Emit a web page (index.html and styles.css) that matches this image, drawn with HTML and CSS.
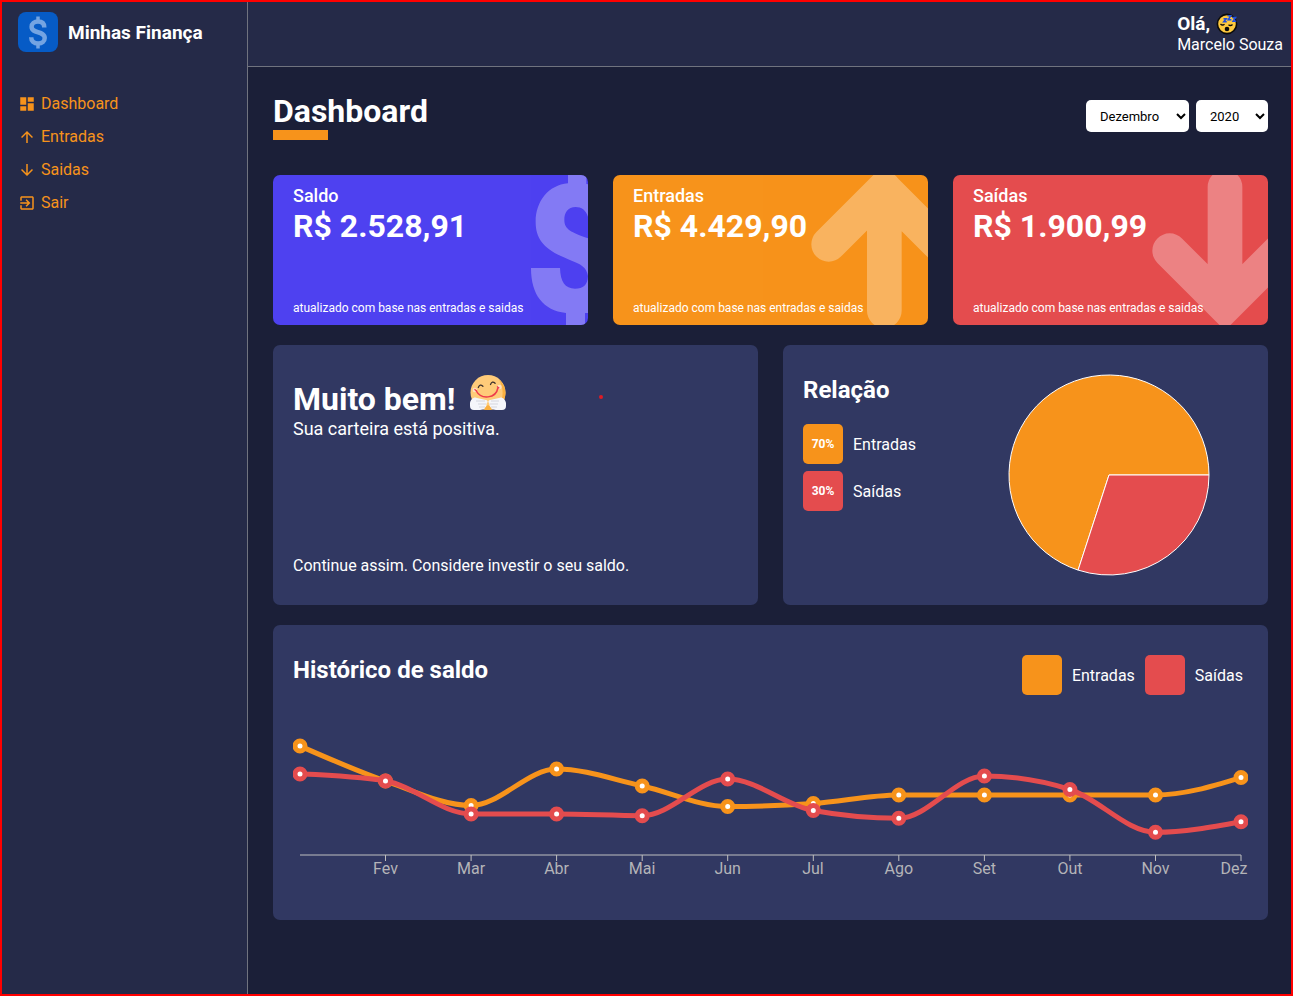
FILE: index.html
```html
<!DOCTYPE html>
<html lang="pt-BR">
<head>
<meta charset="utf-8">
<meta name="viewport" content="width=device-width, initial-scale=1">
<title>Minhas Finança</title>
<link rel="stylesheet" href="styles.css">
</head>
<body>
<div class="layout">
  <aside class="sidebar">
    <div class="brand">
      <svg class="brand-logo" viewBox="0 0 40 40" aria-hidden="true">
        <rect width="40" height="40" rx="8" fill="#065bc6"/>
        <g fill="none" stroke="#74a4e2">
          <path d="M20 4.500V10M20 31v5.500" stroke-width="3.500"/>
          <path d="M26.300 15.500C26.300 11.700 24 9.600 20 9.600C16.300 9.600 13.600 11.800 13.600 14.800C13.600 22 26.700 18.500 26.700 26C26.700 29.500 24 31.500 20.200 31.500C15.800 31.500 13.200 29.200 13.200 25.200" stroke-width="4.500"/>
        </g>
      </svg>
      <h3 class="brand-name">Minhas Finança</h3>
    </div>
    <nav class="menu">
      <a class="menu-link" href="#dashboard"><svg class="menu-icon" viewBox="0 0 24 24" aria-hidden="true"><path d="M3 13h8V3H3v10zm0 8h8v-6H3v6zm10 0h8V11h-8v10zm0-18v6h8V3h-8z"/></svg>Dashboard</a>
      <a class="menu-link" href="#entradas"><svg class="menu-icon" viewBox="0 0 24 24" aria-hidden="true"><path d="M4 12l1.410 1.410L11 7.830V20h2V7.830l5.580 5.590L20 12l-8-8-8 8z"/></svg>Entradas</a>
      <a class="menu-link" href="#saidas"><svg class="menu-icon" viewBox="0 0 24 24" aria-hidden="true"><path d="M20 12l-1.410-1.410L13 16.170V4h-2v12.170l-5.580-5.590L4 12l8 8 8-8z"/></svg>Saidas</a>
      <a class="menu-link" href="#sair"><svg class="menu-icon" viewBox="0 0 24 24" aria-hidden="true"><path d="M10.090 15.590L11.500 17l5-5-5-5-1.410 1.410L12.670 11H3v2h9.670l-2.580 2.590zM19 3H5c-1.110 0-2 .9-2 2v4h2V5h14v14H5v-4H3v4c0 1.100.89 2 2 2h14c1.100 0 2-.9 2-2V5c0-1.100-.9-2-2-2z"/></svg>Sair</a>
    </nav>
  </aside>

  <header class="topbar">
    <div class="profile">
      <h3 class="greeting">Olá,
        <svg class="greeting-emoji" viewBox="0 0 22 22" aria-hidden="true">
          <circle cx="11" cy="11" r="9.600" fill="#fec93e" stroke="#0b0b0b" stroke-width="1.600"/>
          <path d="M4.500 11q2 2 4 .3M12.500 11.800q2 1.600 4-.4" fill="none" stroke="#0b0b0b" stroke-width="1.400"/>
          <ellipse cx="11" cy="16" rx="2.300" ry="2.300" fill="#0b0b0b"/>
          <path d="M7.500 5.800h2.700L7.800 8.700h2.900M11.500 2.800h3.200l-2.500 4h3.200M16.200 4.500h3.300l-2.400 3.800h3.200" fill="none" stroke="#1f4ee0" stroke-width="1.600"/>
        </svg>
      </h3>
      <span class="user-name">Marcelo Souza</span>
    </div>
  </header>

  <main class="content">
    <div class="page-head">
      <h1 class="page-title">Dashboard</h1>
      <div class="filters">
        <select class="filter" aria-label="Mês"><option>Novembro</option><option selected>Dezembro</option></select>
        <select class="filter" aria-label="Ano"><option>2020</option><option>2019</option></select>
      </div>
    </div>

    <div class="cards">
      <section class="card card-balance">
        <svg class="card-art art-dollar" viewBox="774 270 195 450" aria-hidden="true">
          <path d="M909 270H964V297L969 298V395C962 375 950 366 932 366C908 366 898 383 898 405C898 433 918 442 969 460V573C965 545 945 537 920 527C845 497 812 470 812 410C812 350 850 300 909 295Z"/>
          <path d="M798 549H885C886 590 900 611 930 611C955 611 968 600 969 573V684H960V720H903V684C835 676 798 630 798 549Z"/>
        </svg>
        <span class="card-label">Saldo</span>
        <strong class="card-value">R$ 2.528,91</strong>
        <small class="card-note">atualizado com base nas entradas e saidas</small>
      </section>
      <section class="card card-income">
        <svg class="card-art art-arrow" viewBox="609 30 360 450" aria-hidden="true">
          <path d="M671 238L837 72L1003 238M838 72V437"/>
        </svg>
        <span class="card-label">Entradas</span>
        <strong class="card-value">R$ 4.429,90</strong>
        <small class="card-note">atualizado com base nas entradas e saidas</small>
      </section>
      <section class="card card-expense">
        <svg class="card-art art-arrow" viewBox="609 30 360 450" aria-hidden="true">
          <path d="M674 257L840 423L1006 257M840 423V66"/>
        </svg>
        <span class="card-label">Saídas</span>
        <strong class="card-value">R$ 1.900,99</strong>
        <small class="card-note">atualizado com base nas entradas e saidas</small>
      </section>
    </div>

    <div class="panels">
      <section class="panel message">
        <div>
          <h1 class="message-title">Muito bem!
            <svg class="message-emoji" viewBox="0 0 36 36" aria-hidden="true">
              <circle cx="18" cy="17.500" r="17.500" fill="#ffcb79"/>
              <path d="M29 4.500a17.500 17.500 0 0 1-1 28C35 22 33 12 29 4.500z" fill="#fbb040"/>
              <circle cx="4.800" cy="15" r="2.200" fill="#ffe3c2"/><circle cx="29.500" cy="12" r="2.200" fill="#ffe3c2"/>
              <path d="M8.300 12.500q1.600-4 4.600-1.300M20.500 9.500q1.600-4 4.600-1.300" fill="none" stroke="#3b302c" stroke-width="1.300" stroke-linecap="round"/>
              <path d="M6 15.500C11 25 26 24 28 12.500" fill="none" stroke="#ee3b4b" stroke-width="1.500"/>
              <path d="M4.500 14.300l2.500 2M27 11.500l2.300 1.800" stroke="#ee3b4b" stroke-width="1.200"/>
              <path d="M0 31C-1 25 4 21 7 23L16 25C19 26 17 28 16.500 29C17 33 14 35 10 35H4Q0 35 0 31zM36 31C37 25 32 21 29 23L20 25C17 26 19 28 19.500 29C19 33 22 35 26 35H32Q36 35 36 31z" fill="#f5f6fa"/>
              <path d="M6 26h9M8 29h8M9 32h6M29 26h-8M28 29h-8M27 32h-6" stroke="#d4d6df" stroke-width="1"/>
              <path d="M14.500 35q0-3 3.500-5q3.500 2 3.500 5z" fill="#fbb040"/>
            </svg>
          </h1>
          <p class="message-text">Sua carteira está positiva.</p>
        </div>
        <span class="message-foot">Continue assim. Considere investir o seu saldo.</span>
        <i class="marker"></i>
      </section>

      <section class="panel ratio">
        <div class="ratio-side">
          <h2 class="panel-title">Relação</h2>
          <ul class="ratio-legend">
            <li class="legend-item"><span class="swatch swatch-income">70%</span>Entradas</li>
            <li class="legend-item"><span class="swatch swatch-expense">30%</span>Saídas</li>
          </ul>
        </div>
        <div class="ratio-chart">
          <svg class="pie" viewBox="-101 -101 202 202" role="img" aria-label="Entradas 70%, Saídas 30%">
            <path d="M0 0H100A100 100 0 1 0 -30.900 95.100Z" fill="#f7931b"/>
            <path d="M0 0H100A100 100 0 0 1 -30.900 95.100Z" fill="#e44c4e"/>
          </svg>
        </div>
      </section>
    </div>

    <section class="panel history">
      <div class="history-head">
        <h2 class="panel-title">Histórico de saldo</h2>
        <ul class="history-legend">
          <li class="legend-item"><span class="swatch swatch-income"></span>Entradas</li>
          <li class="legend-item"><span class="swatch swatch-expense"></span>Saídas</li>
        </ul>
      </div>
      <svg class="line-chart" viewBox="0 0 955 160" role="img" aria-label="Histórico de saldo por mês">
        <path class="axis" d="M7 125H948M92.500 125v6M178.100 125v6M263.600 125v6M349.200 125v6M434.700 125v6M520.300 125v6M605.800 125v6M691.400 125v6M776.900 125v6M862.500 125v6M948 125v6"/>
        <g class="months">
          <text x="92.500" y="144">Fev</text><text x="178" y="144">Mar</text><text x="263.600" y="144">Abr</text><text x="349" y="144">Mai</text><text x="434.700" y="144">Jun</text><text x="520" y="144">Jul</text><text x="605.800" y="144">Ago</text><text x="691.400" y="144">Set</text><text x="777" y="144">Out</text><text x="862.500" y="144">Nov</text><text x="941" y="144">Dez</text>
        </g>
        <g class="series series-income">
          <path d="M7 16C35.500 28.500 64 41.100 92.500 51C121 60.900 149.600 75.500 178.100 75.500C206.600 75.500 235.100 39 263.600 39C292.100 39 320.700 49.800 349.200 56C377.700 62.200 406.200 76.500 434.700 76.500C463.200 76.500 491.800 75.400 520.300 73.500C548.800 71.600 577.300 65 605.800 65H862.500C891 65 919.500 56.200 948 47.500"/>
          <circle cx="7" cy="16" r="5"/><circle cx="92.500" cy="51" r="5"/><circle cx="178.100" cy="75.500" r="5"/><circle cx="263.600" cy="39" r="5"/><circle cx="349.200" cy="56" r="5"/><circle cx="434.700" cy="76.500" r="5"/><circle cx="520.300" cy="73.500" r="5"/><circle cx="605.800" cy="65" r="5"/><circle cx="691.400" cy="65" r="5"/><circle cx="776.900" cy="65" r="5"/><circle cx="862.500" cy="65" r="5"/><circle cx="948" cy="47.500" r="5"/>
        </g>
        <g class="series series-expense">
          <path d="M7 44C35.500 45.200 64 46.300 92.500 51C121 55.700 149.600 84 178.100 84H263.600C292.100 84 320.700 85.700 349.200 85.700C377.700 85.700 406.200 49 434.700 49C463.200 49 491.800 75.300 520.300 80.500C548.800 85.700 577.300 88.300 605.800 88.300C634.300 88.300 662.900 46 691.400 46C719.900 46 748.400 50.500 776.900 59.500C805.400 68.500 834 102.300 862.500 102.300C891 102.300 919.500 97 948 91.700"/>
          <circle cx="7" cy="44" r="5"/><circle cx="92.500" cy="51" r="5"/><circle cx="178.100" cy="84" r="5"/><circle cx="263.600" cy="84" r="5"/><circle cx="349.200" cy="85.700" r="5"/><circle cx="434.700" cy="49" r="5"/><circle cx="520.300" cy="80.500" r="5"/><circle cx="605.800" cy="88.300" r="5"/><circle cx="691.400" cy="46" r="5"/><circle cx="776.900" cy="59.500" r="5"/><circle cx="862.500" cy="102.300" r="5"/><circle cx="948" cy="91.700" r="5"/>
        </g>
      </svg>
    </section>
  </main>
</div>
</body>
</html>
```
FILE: styles.css
```css
* { box-sizing: border-box; margin: 0; padding: 0; }

body {
  font-family: Roboto, "Liberation Sans", sans-serif;
  font-size: 16px;
  color: #fff;
  background: #1b1f38;
}

body::after {
  content: "";
  position: fixed;
  inset: 0;
  border: 2px solid #f00;
  pointer-events: none;
}

ul { list-style: none; }

.layout {
  display: grid;
  grid-template-columns: 248px 1fr;
  grid-template-rows: 67px 1fr;
  grid-template-areas: "side top" "side main";
  min-height: 100vh;
}

.sidebar {
  grid-area: side;
  background: #252a48;
  border-right: 1px solid #70737f;
}

.brand { display: flex; align-items: center; gap: 10px; padding: 12px 18px; }
.brand-logo { width: 40px; height: 40px; }
.brand-name { padding-top: 2px; font-size: 19px; line-height: 24px; }

.menu { display: flex; flex-direction: column; gap: 14px; padding: 30px 18px; }
.menu-link {
  display: flex;
  align-items: center;
  gap: 5px;
  line-height: 19px;
  color: #f7931b;
  text-decoration: none;
}
.menu-icon { width: 18px; height: 18px; fill: currentColor; }

.topbar {
  grid-area: top;
  display: flex;
  justify-content: flex-end;
  align-items: center;
  padding: 2px 10px 0;
  background: #252a48;
  border-bottom: 1px solid #70737f;
}
.greeting { display: flex; align-items: center; gap: 6px; font-size: 19px; line-height: 22px; }
.greeting-emoji { width: 22px; height: 22px; }
.user-name { display: block; line-height: 20px; }

.content {
  grid-area: main;
  display: flex;
  flex-direction: column;
  gap: 20px;
  padding: 25px;
}

.page-head { display: flex; justify-content: space-between; margin-bottom: 15px; }
.page-title { font-size: 32px; line-height: 38px; }
.page-title::after { content: ""; display: block; width: 55px; height: 10px; background: #f7931b; }
.filters { display: flex; align-items: flex-start; gap: 7px; padding-top: 8px; }
.filter {
  height: 32px;
  padding: 0 12px 0 10px;
  border: 0;
  border-radius: 5px;
  background: #fff;
  color: #000;
  font: 13px Roboto, sans-serif;
}

.cards { display: grid; grid-template-columns: repeat(3, 1fr); gap: 25px; }
.card {
  position: relative;
  display: flex;
  flex-direction: column;
  min-height: 150px;
  padding: 10px 20px;
  border-radius: 7px;
  overflow: hidden;
}
.card-balance { background: #4e41f0; }
.card-income { background: #f7931b; }
.card-expense { background: #e44c4e; }
.card-art { position: absolute; top: 0; right: 0; height: 150px; opacity: 0.3; }
.art-dollar { width: 65px; fill: #fff; }
.art-arrow { width: 120px; fill: none; stroke: #fff; stroke-width: 104px; stroke-linecap: round; }
.card-label { font-size: 18px; font-weight: 500; line-height: 22px; }
.card-value { font-size: 32px; line-height: 38px; }
.card-note { margin-top: auto; font-size: 12px; line-height: 14px; }

.panels { display: grid; grid-template-columns: 1fr 1fr; gap: 25px; }
.panel { border-radius: 7px; background: #313862; }
.panel-title { font-size: 24px; line-height: 31px; }

.message {
  position: relative;
  display: flex;
  flex-direction: column;
  justify-content: space-between;
  min-height: 260px;
  padding: 30px 20px;
}
.message-title { display: flex; gap: 14px; font-size: 32px; line-height: 48px; height: 42px; }
.message-emoji { width: 36px; height: 36px; }
.message-text { font-size: 18px; line-height: 24px; }
.message-foot { line-height: 18px; }
.marker {
  position: absolute;
  top: 50px;
  left: 326px;
  width: 4px;
  height: 4px;
  border-radius: 50%;
  background: #e01b24;
}

.ratio { display: flex; padding-left: 20px; }
.ratio-side { flex: 0 0 147px; padding-top: 30px; }
.ratio-legend { display: grid; gap: 7px; margin-top: 18px; }
.legend-item { display: flex; align-items: center; gap: 10px; }
.swatch {
  display: grid;
  place-items: center;
  width: 40px;
  height: 40px;
  border-radius: 5px;
  font-size: 12px;
  font-weight: 700;
}
.swatch-income { background: #f7931b; }
.swatch-expense { background: #e44c4e; }
.ratio-chart { flex: 1; display: grid; place-items: center; }
.pie { width: 202px; height: 202px; stroke: #fff; stroke-width: 1px; }

.history { padding: 30px 20px; }
.history-head { display: flex; justify-content: space-between; margin-bottom: 35px; }
.history-legend { display: flex; gap: 10px; padding-right: 5px; }
.line-chart { display: block; width: 100%; height: auto; }
.axis { fill: none; stroke: #bfbfbf; stroke-width: 1px; }
.months { fill: #b4b4b8; font-size: 16px; text-anchor: middle; }
.series { stroke-width: 5px; }
.series path { fill: none; }
.series circle { fill: #fff; }
.series-income { stroke: #f7931b; }
.series-expense { stroke: #e44c4e; }
```
